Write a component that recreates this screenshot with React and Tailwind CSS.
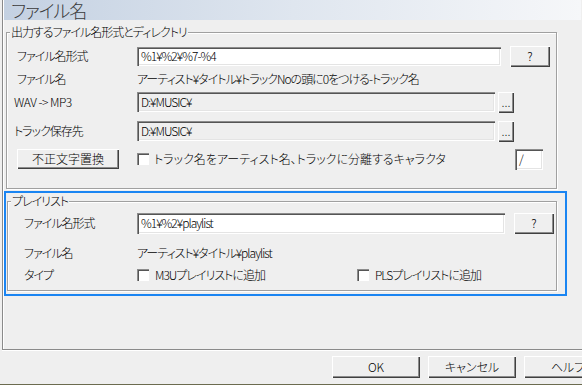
const font = {
  fontFamily: '"Noto Sans CJK JP", "Liberation Sans", sans-serif',
};

function Sunken({ className = "", children }) {
  return (
    <div
      className={`flex items-center pl-[4px] text-[12px] leading-[14px] text-black shadow-[inset_1px_1px_0_#8c8c8c,inset_2px_2px_0_#555,inset_-1px_-1px_0_#fff,inset_-2px_-2px_0_#e4e4e4] ${className}`}
    >
      {children}
    </div>
  );
}

function Button({ className = "", children }) {
  return (
    <div
      className={`flex items-center justify-center bg-[#efefef] text-[12px] leading-[14px] tracking-normal text-black shadow-[inset_1px_1px_0_#fff,inset_-1px_-1px_0_#404040,inset_-2px_-2px_0_#8c8c8c] ${className}`}
    >
      {children}
    </div>
  );
}

function Check() {
  return (
    <span className="block h-[12px] w-[12px] shrink-0 bg-white shadow-[inset_1px_1px_0_#8c8c8c,inset_2px_2px_0_#555,inset_-1px_-1px_0_#fff]" />
  );
}

function Group({ label, className = "", children }) {
  return (
    <div
      className={`relative border border-[#a0a0a0] shadow-[inset_1px_1px_0_#fff,1px_1px_0_#fff] ${className}`}
    >
      <span className="absolute left-[3px] top-[-8px] bg-[#efefef] px-[1px] text-[12px] leading-[14px] text-black">
        {label}
      </span>
      {children}
    </div>
  );
}

export default function App() {
  return (
    <div
      className="flex h-[385px] w-[582px] flex-col overflow-hidden bg-[#efefef] text-[12px] font-light tracking-[-1px] text-black [font-feature-settings:'palt']"
      style={font}
    >
      <div className="ml-[2px] flex h-[350px] w-[640px] shrink-0 flex-col border-b border-l border-[#8a8a8a] shadow-[inset_1px_0_0_#fff,0_1px_0_#fff]">
        <div className="ml-[1px] flex h-[20px] w-[577px] items-center bg-gradient-to-r from-[#c4d1e2] via-[#dfe6ef] to-[#f6f7f9] pl-[7px] text-[18px] leading-[18px] text-[#3a3a3a]">
          ファイル名
        </div>

        <Group label="出力するファイル名形式とディレクトリ" className="ml-[3px] mt-[12px] h-[157px] w-[551px]">
          <div className="flex flex-col pt-[12px]">
            <div className="flex h-[22px] items-center pl-[10px]">
              <span className="w-[120px]">ファイル名形式</span>
              <Sunken className="h-[19px] w-[364px] bg-white text-[11px]">%1¥%2¥%7-%4</Sunken>
              <Button className="ml-[9px] h-[21px] w-[40px]">?</Button>
            </div>
            <div className="mt-[5px] flex h-[14px] items-center pl-[10px] leading-[14px]">
              <span className="w-[120px]">ファイル名</span>
              <span>アーティスト¥タイトル¥トラックNoの頭に0をつける-トラック名</span>
            </div>
            <div className="mt-[5px] flex h-[22px] items-center pl-[7px]">
              <span className="w-[123px] tracking-[-0.5px]">WAV -&gt; MP3</span>
              <Sunken className="h-[20px] w-[358px]">D:¥MUSIC¥</Sunken>
              <Button className="ml-[3px] h-[21px] w-[16px] items-end pb-[4px] text-[10px] leading-[10px]">...</Button>
            </div>
            <div className="mt-[7px] flex h-[22px] items-center pl-[7px]">
              <span className="w-[123px]">トラック保存先</span>
              <Sunken className="h-[20px] w-[358px]">D:¥MUSIC¥</Sunken>
              <Button className="ml-[3px] h-[21px] w-[16px] items-end pb-[4px] text-[10px] leading-[10px]">...</Button>
            </div>
            <div className="mt-[6px] flex h-[22px] items-center pl-[10px]">
              <Button className="h-[20px] w-[102px]">不正文字置換</Button>
              <span className="ml-[18px]"><Check /></span>
              <span className="ml-[5px] flex-1 tracking-[0px]">トラック名をアーティスト名、トラックに分離するキャラクタ</span>
              <Sunken className="mr-[13px] h-[21px] w-[28px] bg-white">/</Sunken>
            </div>
          </div>
        </Group>

        <div className="ml-[1px] mt-[2px] h-[105px] w-[563px] border-2 border-[#1a85f2]">
          <Group label="プレイリスト" className="ml-[1px] mt-[8px] h-[90px] w-[550px]">
            <div className="flex flex-col pt-[10px]">
              <div className="flex h-[22px] items-center pl-[16px]">
                <span className="w-[113px]">ファイル名形式</span>
                <Sunken className="h-[21px] w-[368px] bg-white">%1¥%2¥playlist</Sunken>
                <Button className="ml-[9px] h-[21px] w-[40px]">?</Button>
              </div>
              <div className="mt-[12px] flex h-[14px] items-center pl-[16px]">
                <span className="w-[113px]">ファイル名</span>
                <span>アーティスト¥タイトル¥playlist</span>
              </div>
              <div className="mt-[8px] flex h-[14px] items-center pl-[16px]">
                <span className="w-[113px]">タイプ</span>
                <div className="flex w-[220px] items-center">
                  <Check />
                  <span className="ml-[6px]">M3Uプレイリストに追加</span>
                </div>
                <Check />
                <span className="ml-[6px]">PLSプレイリストに追加</span>
              </div>
            </div>
          </Group>
        </div>
      </div>

      <div className="mt-[6px] flex gap-[8px] pl-[332px]">
        <Button className="h-[22px] w-[88px] shrink-0">OK</Button>
        <Button className="h-[22px] w-[88px] shrink-0">キャンセル</Button>
        <Button className="h-[22px] w-[88px] shrink-0">ヘルプ</Button>
      </div>
      <div className="mt-auto h-[1px] w-full bg-[#6b6b4f]" />
    </div>
  );
}
